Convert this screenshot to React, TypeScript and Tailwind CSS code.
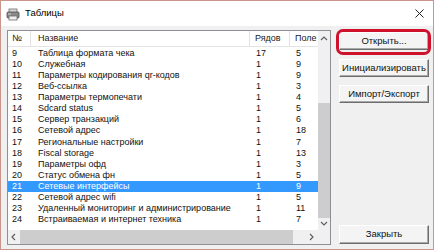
const ROWS: [string, string, string, string][] = [
  ["9", "Таблица формата чека", "17", "5"],
  ["10", "Служебная", "1", "9"],
  ["11", "Параметры кодирования qr-кодов", "1", "9"],
  ["12", "Веб-ссылка", "1", "3"],
  ["13", "Параметры термопечати", "1", "4"],
  ["14", "Sdcard status", "1", "5"],
  ["15", "Сервер транзакций", "1", "6"],
  ["16", "Сетевой адрес", "1", "18"],
  ["17", "Региональные настройки", "1", "7"],
  ["18", "Fiscal storage", "1", "13"],
  ["19", "Параметры офд", "1", "3"],
  ["20", "Статус обмена фн", "1", "5"],
  ["21", "Сетевые интерфейсы", "1", "9"],
  ["22", "Сетевой адрес wifi", "1", "5"],
  ["23", "Удаленный мониторинг и администрирование", "1", "11"],
  ["24", "Встраиваемая и интернет техника", "1", "7"],
];

const SELECTED = "21";

function Button({ label, className = "" }: { label: string; className?: string }) {
  return (
    <div
      className={`flex h-[18px] items-center justify-center border border-t-white border-l-white border-r-[#6d6d6d] border-b-[#6d6d6d] bg-[#f4f4f4] shadow-[inset_-1px_-1px_0_#a9a9a9] text-[9.5px] text-[#111] ${className}`}
    >
      {label}
    </div>
  );
}

function Chevron({ dir }: { dir: "up" | "down" | "left" | "right" }) {
  const d =
    dir === "up" ? "M1 5 L4 2 L7 5" :
    dir === "down" ? "M1 2 L4 5 L7 2" :
    dir === "left" ? "M5 1 L2 4 L5 7" : "M2 1 L5 4 L2 7";
  return (
    <svg width="8" height="8" viewBox="0 0 8 8">
      <path d={d} fill="none" stroke="#606060" strokeWidth="1.2" />
    </svg>
  );
}

export default function App() {
  return (
    <div
      className="w-[434px] h-[250px] overflow-hidden border border-[#c9958a] bg-[#f0f0f0] flex flex-col"
      style={{ fontFamily: '"Liberation Sans", Arial, sans-serif' }}
    >
      {/* title bar */}
      <div className="h-[25px] shrink-0 bg-white flex items-center pl-[5px] pr-[9px]">
        <svg width="14" height="14" viewBox="0 0 14 14" className="mr-[5px]">
          <rect x="3" y="2" width="8" height="4" fill="#d8d8d8" stroke="#6e6e6e" strokeWidth="0.8" />
          <rect x="1" y="5" width="12" height="6" rx="1" fill="#8a8a8a" stroke="#4a4a4a" strokeWidth="0.8" />
          <rect x="3" y="9" width="8" height="4" fill="#efefef" stroke="#6e6e6e" strokeWidth="0.8" />
          <rect x="2" y="6.5" width="3" height="1" fill="#cfcfcf" />
        </svg>
        <span className="text-[9.5px] text-black">Таблицы</span>
        <div className="flex-1" />
        <svg width="9" height="9" viewBox="0 0 9 9">
          <path d="M0.5 0.5 L8.5 8.5 M8.5 0.5 L0.5 8.5" stroke="#222" strokeWidth="1" />
        </svg>
      </div>

      {/* body */}
      <div className="flex flex-1 pl-[6px] pr-[4px] pt-[4px] pb-[4px] gap-[8px]">
        {/* list */}
        <div className="w-[324px] h-[215px] border border-[#8c8f94] bg-white flex text-[9px] text-[#111]">
          <div className="flex-1 flex flex-col min-w-0">
            <div className="h-[16px] shrink-0 flex border-b border-[#e3e3e3] text-[#1a1a1a]">
              <div className="w-[23px] pl-[4px] border-r border-[#e3e3e3] flex items-center">№</div>
              <div className="w-[219px] pl-[7px] border-r border-[#e3e3e3] flex items-center">Название</div>
              <div className="w-[40px] pl-[5px] border-r border-[#e3e3e3] flex items-center">Рядов</div>
              <div className="flex-1 pl-[5px] flex items-center">Поле</div>
            </div>
            <div className="flex-1 pt-[1px] overflow-hidden">
              {ROWS.map(([n, name, rows, fields]) => {
                const sel = n === SELECTED;
                return (
                  <div
                    key={n}
                    className={`h-[11.1px] flex items-center whitespace-nowrap ${sel ? "bg-[#3399ff] text-white" : ""}`}
                  >
                    <div className="w-[23px] pl-[4px] shrink-0">{n}</div>
                    <div className="w-[219px] pl-[7px] shrink-0 overflow-hidden">{name}</div>
                    <div className="w-[40px] pl-[6px] shrink-0">{rows}</div>
                    <div className="flex-1 pl-[6px]">{fields}</div>
                  </div>
                );
              })}
            </div>
            {/* horizontal scrollbar */}
            <div className="h-[14px] shrink-0 flex items-center bg-[#f0f0f0]">
              <div className="w-[12px] flex justify-center"><Chevron dir="left" /></div>
              <div className="w-[273px] h-[14px] bg-[#cdcdcd]" />
              <div className="flex-1" />
              <div className="w-[12px] flex justify-center"><Chevron dir="right" /></div>
            </div>
          </div>
          {/* vertical scrollbar */}
          <div className="w-[12px] shrink-0 flex flex-col bg-[#f0f0f0]">
            <div className="h-[15px] flex items-center justify-center"><Chevron dir="up" /></div>
            <div className="h-[57px]" />
            <div className="h-[115px] bg-[#cdcdcd]" />
            <div className="h-[12px] flex items-center justify-center"><Chevron dir="down" /></div>
            <div className="flex-1" />
          </div>
        </div>

        {/* buttons */}
        <div className="flex-1 flex flex-col pt-[2px]">
          <div className="relative">
            <Button label="Открыть..." />
            <div className="absolute -left-[3px] -top-[3px] -right-[2px] -bottom-[5px] rounded-[7px] border-[3px] border-[#d0112b]" />
          </div>
          <Button label="Инициализировать" className="mt-[9px]" />
          <Button label="Импорт/Экспорт" className="mt-[8px]" />
          <div className="flex-1" />
          <Button label="Закрыть" className="mb-[1px] h-[19px]" />
        </div>
      </div>
    </div>
  );
}
